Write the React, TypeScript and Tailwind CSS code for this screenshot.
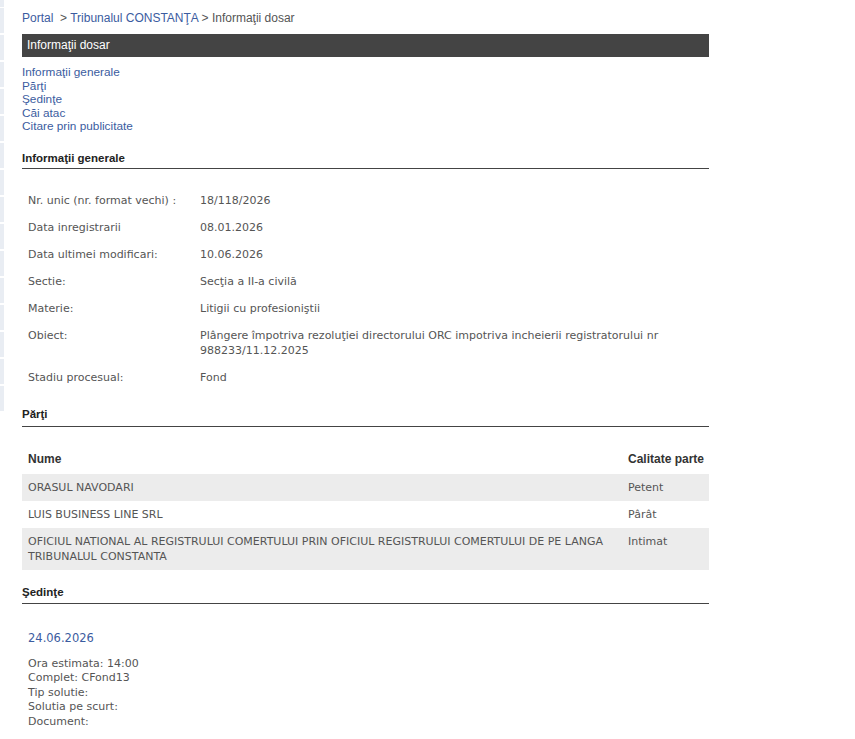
import React from "react";

const verdana = "font-['DejaVu_Sans',Verdana,sans-serif]";
const arial = "font-['Liberation_Sans',Arial,sans-serif]";

const info: [string, string[]][] = [
  ["Nr. unic (nr. format vechi) :", ["18/118/2026"]],
  ["Data inregistrarii", ["08.01.2026"]],
  ["Data ultimei modificari:", ["10.06.2026"]],
  ["Sectie:", ["Secţia a II-a civilă"]],
  ["Materie:", ["Litigii cu profesioniştii"]],
  [
    "Obiect:",
    [
      "Plângere împotriva rezoluţiei directorului ORC impotriva incheierii registratorului nr",
      "988233/11.12.2025",
    ],
  ],
  ["Stadiu procesual:", ["Fond"]],
];

const parti: [string[], string][] = [
  [["ORASUL NAVODARI"], "Petent"],
  [["LUIS BUSINESS LINE SRL"], "Pârât"],
  [
    [
      "OFICIUL NATIONAL AL REGISTRULUI COMERTULUI PRIN OFICIUL REGISTRULUI COMERTULUI DE PE LANGA",
      "TRIBUNALUL CONSTANTA",
    ],
    "Intimat",
  ],
];

const navLinks = [
  "Informaţii generale",
  "Părţi",
  "Şedinţe",
  "Căi atac",
  "Citare prin publicitate",
];

const sedinta = [
  "Ora estimata: 14:00",
  "Complet: CFond13",
  "Tip solutie:",
  "Solutia pe scurt:",
  "Document:",
];

function SectionTitle({ title, className }: { title: string; className?: string }) {
  return (
    <div
      className={`${arial} ${className ?? ""} text-[11.5px] font-bold leading-[16px] text-[#222] border-b border-[#444]`}
    >
      {title}
    </div>
  );
}

// the collapsed side menu, only its right edge is visible
function SideStrip() {
  return (
    <div className="w-[4px] shrink-0 flex flex-col">
      <div className="h-[8px] bg-[#e9edf3] border-b border-white" />
      {Array.from({ length: 15 }).map((_, i) => (
        <div key={i} className="h-[27px] bg-[#e9edf3] border-b-2 border-white" />
      ))}
    </div>
  );
}

export default function App() {
  return (
    <div className="flex bg-white min-h-screen">
      <SideStrip />
      <div className="ml-[18px] w-[687px] pb-[20px]">
        {/* breadcrumb */}
        <div className={`${arial} pt-[11px] text-[12px] leading-[14px] whitespace-pre text-[#555]`}>
          <a className="text-[#3b5ca0]">Portal</a>
          {"  > "}
          <a className="text-[#3b5ca0]">Tribunalul CONSTANŢA</a>
          {" > Informaţii dosar"}
        </div>

        <div
          className={`${arial} mt-[9px] h-[23px] bg-[#444444] pl-[5px] text-[12px] leading-[23px] text-white`}
        >
          Informaţii dosar
        </div>

        <div className={`${arial} mt-[9px] flex flex-col text-[11.8px] leading-[13.5px] text-[#3b5ca0]`}>
          {navLinks.map((l) => (
            <a key={l}>{l}</a>
          ))}
        </div>

        <SectionTitle title="Informaţii generale" className="mt-[16px] pb-[2px]" />
        <div className={`${verdana} mt-[18px] text-[11px] leading-[15px] text-[#555]`}>
          {info.map(([label, value]) => (
            <div key={label} className="flex py-[6px]">
              <div className="w-[178px] shrink-0 pl-[6px]">{label}</div>
              <div className="flex-1">
                {value.map((v) => (
                  <div key={v}>{v}</div>
                ))}
              </div>
            </div>
          ))}
        </div>

        <SectionTitle title="Părţi" className="mt-[15px] pb-[4px]" />
        <div className={`${verdana} mt-[17px] text-[11px] leading-[15px] text-[#555]`}>
          <div
            className={`${arial} flex py-[7px] text-[12px] leading-[16px] font-bold text-[#333] whitespace-nowrap`}
          >
            <div className="w-[600px] pl-[6px]">Nume</div>
            <div className="flex-1 pl-[6px]">Calitate parte</div>
          </div>
          {parti.map(([nume, calitate], i) => (
            <div key={calitate} className={`flex py-[6px] ${i % 2 === 0 ? "bg-[#ececec]" : ""}`}>
              <div className="w-[600px] pl-[6px]">
                {nume.map((n) => (
                  <div key={n}>{n}</div>
                ))}
              </div>
              <div className="flex-1 pl-[6px]">{calitate}</div>
            </div>
          ))}
        </div>

        <SectionTitle title="Şedinţe" className="mt-[14px] pb-[3px]" />
        <div className={`${verdana} pl-[6px] text-[11px] text-[#555]`}>
          <div className="mt-[26px] text-[11.5px] leading-[16px] text-[#3b5ca0]">24.06.2026</div>
          <div className="mt-[11px] leading-[14.6px]">
            {sedinta.map((s) => (
              <div key={s}>{s}</div>
            ))}
          </div>
        </div>
      </div>
    </div>
  );
}
